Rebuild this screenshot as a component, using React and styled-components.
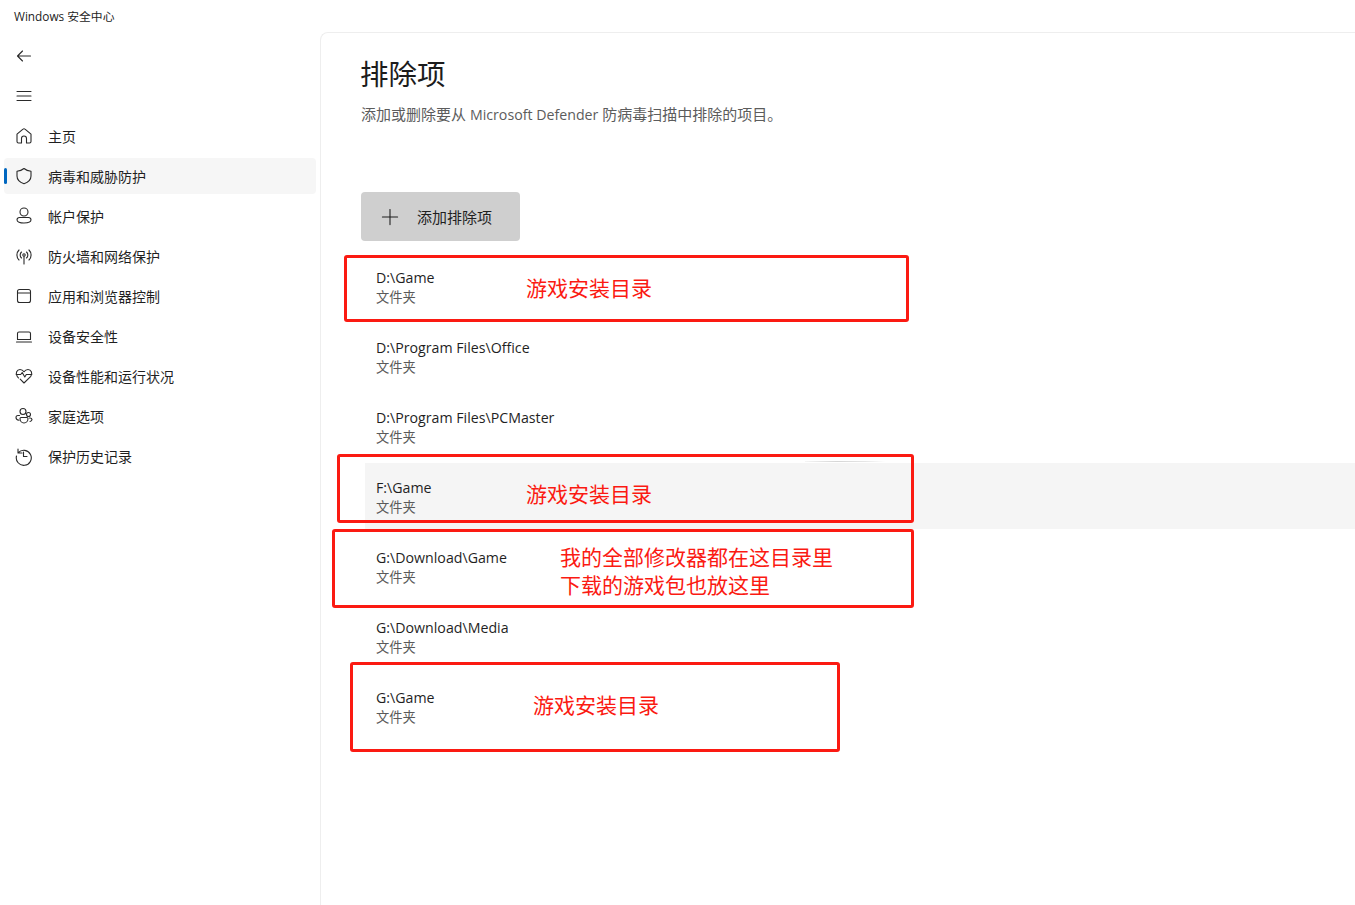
import React from 'react';
import styled, { createGlobalStyle } from 'styled-components';
import { Plus } from 'lucide-react';

const FONT = '"Open Sans", "Noto Sans CJK SC", sans-serif';

const GlobalStyle = createGlobalStyle`
  html, body {
    margin: 0;
    padding: 0;
    background: #fff;
    overflow: hidden;
  }
  body {
    font-family: ${FONT};
    color: #1b1b1b;
  }
`;

const Page = styled.div`
  position: relative;
  width: 1355px;
  height: 905px;
  overflow: hidden;
`;

const TitleBar = styled.div`
  height: 32px;
  padding-left: 14px;
  font-size: 11.8px;
  line-height: 33px;
  color: #222;
`;

const Body = styled.div`
  display: flex;
  height: 873px;
`;

const Sidebar = styled.nav`
  width: 320px;
  flex: none;
  padding: 6px 4px 0;
  box-sizing: border-box;
`;

const NavRow = styled.div`
  position: relative;
  display: flex;
  align-items: center;
  height: 36px;
  margin-bottom: 4px;
  padding-left: 10px;
  border-radius: 4px;
  font-size: 14px;
  color: #1f1f1f;
  background: ${props => (props.$active ? '#f6f6f6' : 'transparent')};

  ${props =>
    props.$active &&
    `&::before {
      content: '';
      position: absolute;
      left: 0;
      top: 10px;
      width: 3px;
      height: 16px;
      border-radius: 2px;
      background: #0067c0;
    }`}
`;

const NavIcon = styled.svg`
  width: 20px;
  height: 20px;
  flex: none;
  margin-right: 14px;
  fill: none;
  stroke: #2a2a2a;
  stroke-width: 1.1;
  stroke-linecap: round;
  stroke-linejoin: round;
`;

const Main = styled.main`
  flex: 1;
  border-left: 1px solid #eeeeee;
  border-top: 1px solid #eeeeee;
  border-top-left-radius: 8px;
  padding: 21px 0 0 40px;
`;

const Heading = styled.h1`
  margin: 0 0 0 -1px;
  font-size: 28.5px;
  font-weight: 400;
  line-height: 40px;
  color: #1c1c1c;
`;

const Subtitle = styled.p`
  margin: 0;
  padding-top: 10px;
  font-size: 15px;
  line-height: 20px;
  color: #5c5c5c;
`;

const LatinRun = styled.span`
  font-size: 14.2px;
`;

const AddButton = styled.div`
  display: flex;
  align-items: center;
  width: 159px;
  height: 49px;
  margin-top: 67px;
  padding-left: 16px;
  box-sizing: border-box;
  border-radius: 4px;
  background: #cfcfcf;
  font-size: 15px;
  color: #1f1f1f;

  svg {
    margin-right: 14px;
  }
`;

const List = styled.div`
  display: flex;
  flex-direction: column;
  gap: 4px;
  margin: 12px 0 0 4px;
`;

const Row = styled.div`
  position: relative;
  height: 66px;
  padding: 3px 0 0 11px;
  box-sizing: border-box;
  display: flex;
  flex-direction: column;
  justify-content: center;
  background: ${props => (props.$hover ? '#f5f5f5' : 'transparent')};

  ${props =>
    props.$hover &&
    `&::before {
      content: '';
      position: absolute;
      left: 440px;
      top: -2px;
      width: 80px;
      height: 1px;
      background: linear-gradient(90deg, #f5f5f5, #d6d6d6 40%, #e6e6e6 75%, #ffffff);
    }`}
`;

const RowPath = styled.div`
  font-size: 14.2px;
  line-height: 20px;
  color: #1f1f1f;
`;

const RowType = styled.div`
  font-size: 13.3px;
  line-height: 19px;
  color: #5a5a5a;
`;

const Callout = styled.div`
  position: absolute;
  left: ${props => props.$x}px;
  top: ${props => props.$y}px;
  width: ${props => props.$w}px;
  height: ${props => props.$h}px;
  box-sizing: border-box;
  border: 3px solid #fb1a12;
  border-radius: 3px;
`;

const Note = styled.div`
  position: absolute;
  left: ${props => props.$x}px;
  top: ${props => props.$y}px;
  font-size: 21px;
  line-height: 28px;
  color: #fb1a12;
  white-space: nowrap;
`;

const icons = {
  back: <path d="M16.5 10H3.500M8.500 5l-5 5 5 5" />,
  menu: <path d="M3 5.500h14M3 10h14M3 14.500h14" />,
  home: (
    <path d="M3 8.200 9 3.200a1.500 1.500 0 0 1 2 0l6 5v7.300a1.500 1.500 0 0 1-1.500 1.500h-3v-4.500a2.500 2.500 0 0 0-5 0V17h-3A1.500 1.500 0 0 1 3 15.500z" />
  ),
  shield: (
    <path d="M10 2.500c2 1.700 4.300 2.500 7 2.700V10c0 3.700-2.400 6.200-7 7.800C5.400 16.200 3 13.700 3 10V5.200c2.700-.2 5-1 7-2.700z" />
  ),
  account: (
    <>
      <circle cx="10" cy="6" r="4" />
      <path d="M5.500 11.500h9a2.500 2.500 0 0 1 2.500 2.300c0 2-3 3.200-7 3.200s-7-1.200-7-3.200a2.500 2.500 0 0 1 2.500-2.300z" />
    </>
  ),
  network: (
    <>
      <circle cx="10" cy="9" r="1.200" />
      <path d="M10 10.500V18M7.500 6a4 4 0 0 0 0 6M12.500 6a4 4 0 0 1 0 6M5 4a7 7 0 0 0 0 10M15 4a7 7 0 0 1 0 10" />
    </>
  ),
  browser: (
    <>
      <rect x="3.500" y="3.500" width="13" height="13" rx="2" />
      <path d="M3.500 7h13" />
    </>
  ),
  laptop: (
    <>
      <path d="M3.500 13.500V7.500A1.500 1.500 0 0 1 5 6h10a1.500 1.500 0 0 1 1.500 1.500v6z" />
      <path d="M2.500 16h15" />
    </>
  ),
  health: (
    <path d="M4.500 12 3.200 10.300C1 7.200 3 3.500 6 3.500c1.800 0 3 .9 4 2.300 1-1.400 2.200-2.300 4-2.300 3 0 5 3.700 2.800 6.800L10 17l-3.800-3.800M2.200 8.500h4.500l1.500-2 2.600 4.500 1.500-2.500h5.500" />
  ),
  family: (
    <>
      <circle cx="9" cy="5.500" r="3" />
      <circle cx="14.500" cy="8.500" r="2" />
      <path d="M5.500 9.500H4a2 2 0 0 0-2 2c0 1.300 1.200 2.500 3 2.800M15.500 12h.5a2 2 0 0 1 2 1.500c0 .8-.7 1.700-2 2" />
      <path d="M7 11.500h6a1 1 0 0 1 1 1c0 2.600-1.800 4.500-4 4.500s-4-1.900-4-4.500a1 1 0 0 1 1-1z" />
    </>
  ),
  history: (
    <>
      <path d="M4 3v4h4M4.300 6.700A7.500 7.500 0 1 1 2.500 10" />
      <path d="M9.500 6v4.500h3.500" />
    </>
  ),
};

const navItems = [
  { icon: 'back' },
  { icon: 'menu' },
  { icon: 'home', label: '主页' },
  { icon: 'shield', label: '病毒和威胁防护', active: true },
  { icon: 'account', label: '帐户保护' },
  { icon: 'network', label: '防火墙和网络保护' },
  { icon: 'browser', label: '应用和浏览器控制' },
  { icon: 'laptop', label: '设备安全性' },
  { icon: 'health', label: '设备性能和运行状况' },
  { icon: 'family', label: '家庭选项' },
  { icon: 'history', label: '保护历史记录' },
];

const exclusions = [
  { path: 'D:\\Game' },
  { path: 'D:\\Program Files\\Office' },
  { path: 'D:\\Program Files\\PCMaster' },
  { path: 'F:\\Game', hover: true },
  { path: 'G:\\Download\\Game' },
  { path: 'G:\\Download\\Media' },
  { path: 'G:\\Game' },
];

const callouts = [
  { x: 344, y: 255, w: 565, h: 67 },
  { x: 337, y: 454, w: 577, h: 69 },
  { x: 332, y: 529, w: 582, h: 79 },
  { x: 350, y: 662, w: 490, h: 90 },
];

const notes = [
  { x: 526, y: 274, text: '游戏安装目录' },
  { x: 526, y: 480, text: '游戏安装目录' },
  { x: 560, y: 543, text: '我的全部修改器都在这目录里' },
  { x: 560, y: 571, text: '下载的游戏包也放这里' },
  { x: 533, y: 691, text: '游戏安装目录' },
];

const App = () => (
  <Page>
    <GlobalStyle />
    <TitleBar>Windows 安全中心</TitleBar>
    <Body>
      <Sidebar>
        {navItems.map(({ icon, label, active }) => (
          <NavRow key={icon} $active={active}>
            <NavIcon viewBox="0 0 20 20">{icons[icon]}</NavIcon>
            {label}
          </NavRow>
        ))}
      </Sidebar>
      <Main>
        <Heading>排除项</Heading>
        <Subtitle>
          添加或删除要从 <LatinRun>Microsoft Defender</LatinRun> 防病毒扫描中排除的项目。
        </Subtitle>
        <AddButton>
          <Plus size={26} strokeWidth={1} color="#1f1f1f" />
          添加排除项
        </AddButton>
        <List>
          {exclusions.map(({ path, hover }) => (
            <Row key={path} $hover={hover}>
              <RowPath>{path}</RowPath>
              <RowType>文件夹</RowType>
            </Row>
          ))}
        </List>
      </Main>
    </Body>
    {callouts.map(({ x, y, w, h }) => (
      <Callout key={`${x}-${y}`} $x={x} $y={y} $w={w} $h={h} />
    ))}
    {notes.map(({ x, y, text }) => (
      <Note key={`${x}-${y}`} $x={x} $y={y}>
        {text}
      </Note>
    ))}
  </Page>
);

export default App;
